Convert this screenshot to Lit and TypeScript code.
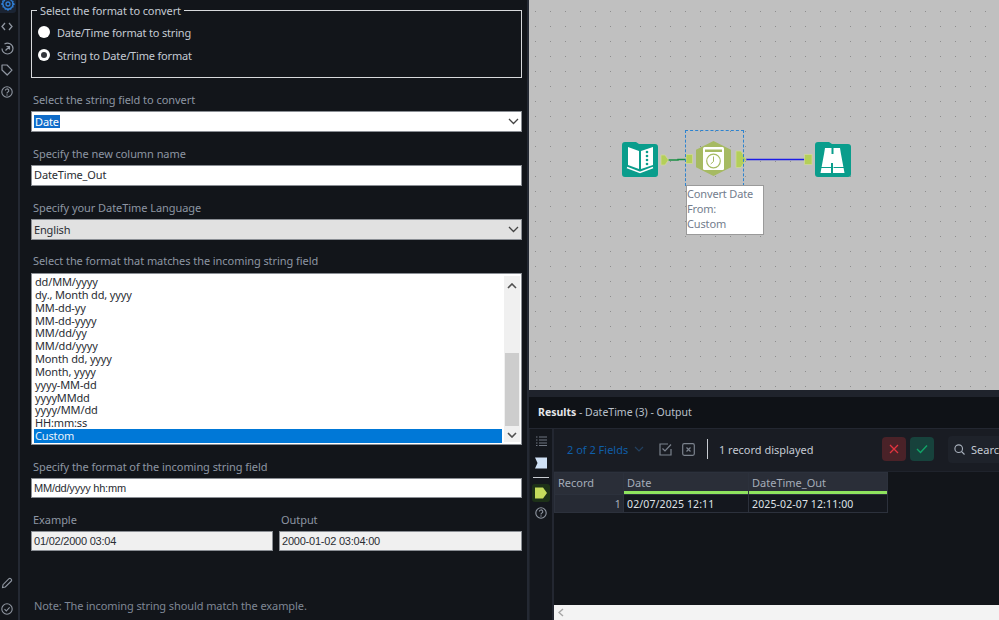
import { LitElement, html, css, svg } from "lit";
import { customElement } from "lit/decorators.js";

const chevDown = html`<svg class="chev" width="11" height="7" viewBox="0 0 11 7"><path d="M1 1l4.500 4.500L10 1" fill="none" stroke="#444" stroke-width="1.300"/></svg>`;

const FORMATS = ["dd/MM/yyyy","dy., Month dd, yyyy","MM-dd-yy","MM-dd-yyyy","MM/dd/yy","MM/dd/yyyy","Month dd, yyyy","Month, yyyy","yyyy-MM-dd","yyyyMMdd","yyyy/MM/dd","HH:mm:ss"];

@customElement("app-root")
export class AppRoot extends LitElement {
  static styles = css`
    :host { display: block; width: 999px; height: 620px; overflow: hidden; background: #12151a;
      font-family: "Noto Sans", "Open Sans", sans-serif; font-size: 11px; color: #aab2be; }
    * { box-sizing: border-box; }
    .app { display: flex; width: 999px; height: 620px; }

    .rail { width: 18px; flex: none; display: flex; flex-direction: column; background: #12151a; }
    .rail-active { width: 16px; height: 13px; background: #1b2433; border-radius: 0 0 3px 0; display: flex; justify-content: center; overflow: hidden; flex: none; }
    .rail-icons { display: flex; flex-direction: column; padding-top: 2px; width: 14px; }
    .slot { height: 22px; display: flex; align-items: center; justify-content: center; flex: none; }
    .rail-spacer { flex: 1; }
    .rail-bottom { display: flex; flex-direction: column; gap: 14px; padding-bottom: 5px; margin-left: 1px; }
    .sep { width: 2px; flex: none; background: #242933; }

    .panel { width: 507px; flex: none; background: #12151a; padding: 0 5px 0 11px; display: flex; flex-direction: column; }
    .group { position: relative; height: 68px; margin-top: 10px; border: 1px solid #d7d9dc; padding: 13px 0 0 6px; display: flex; flex-direction: column; gap: 7px; flex: none; }
    .legend { position: absolute; left: 5px; top: -7px; background: #12151a; padding: 0 3px; line-height: 13px; color: #c4cad3; letter-spacing: -.11px; }
    .radio-row { display: flex; align-items: center; gap: 7px; height: 16px; color: #c4cad3; letter-spacing: -.18px; }
    .radio { width: 12px; height: 12px; border-radius: 50%; background: #fff; flex: none; display: flex; align-items: center; justify-content: center; }
    .radio.on::after { content: ""; width: 6px; height: 6px; border-radius: 50%; background: #33363c; }

    .lbl { color: #8d95a3; line-height: 14px; height: 14px; padding-left: 2px; letter-spacing: -.06px; white-space: nowrap; flex: none; }
    .mt15 { margin-top: 15px; }
    .mt14 { margin-top: 14px; }
    .box { height: 21px; flex: none; margin-top: 4px; background: #fff; border: 1px solid #8a8e94; color: #2a2d33; display: flex; align-items: center; padding: 0 2px 0 2px; justify-content: space-between; letter-spacing: -.15px; }
    .box.h20 { height: 20px; }
    .txt { position: relative; top: -1px; }
    .hl { background: #0f6cc9; color: #fff; padding: 0 1px; line-height: 13px; }
    .box.gray { background: #e1e1e1; }
    .box.ro { background: #f0f0f0; height: 20px; }
    .box.arial { font-family: "Liberation Sans", sans-serif; letter-spacing: -.22px; }

    .list { margin-top: 5px; height: 172px; flex: none; background: #fff; border: 1px solid #8a8e94; padding: 2px 1px 2px 2px; display: flex; color: #2a2d33; }
    .items { flex: 1; min-width: 0; letter-spacing: -.15px; margin-top: -1px; }
    .item { height: 12.85px; line-height: 13px; padding-left: 1px; white-space: nowrap; }
    .item.sel { background: #0078d7; color: #e8f2fb; height: 14px; margin-top: -.5px; }
    .sb { width: 16px; flex: none; background: #f0f0f0; display: flex; flex-direction: column; margin-left: 2px; }
    .sb-btn { height: 19px; display: flex; align-items: center; justify-content: center; flex: none; }
    .sb-gap { height: 58px; flex: none; }
    .sb-thumb { flex: 1; background: #cdcdcd; margin: 0 1px 1px; }

    .pair { display: grid; grid-template-columns: 242px 243px; column-gap: 6px; }
    .note { margin-top: auto; margin-bottom: 7px; padding-left: 3px; color: #7f8795; letter-spacing: -.09px; line-height: 14px; }

    .right { width: 470px; flex: none; display: flex; flex-direction: column; }
    .canvas { height: 390px; flex: none; position: relative; background-color: #c0c0c0;
      background-image: radial-gradient(circle at center, #8e8e8e 0.6px, transparent 0.9px);
      background-size: 15px 15px; background-position: -1px 4px; overflow: hidden; }
    .wires { position: absolute; left: 0; top: 0; }
    .selbox { position: absolute; left: 156px; top: 130px; width: 59px; height: 56px; border: 1px dashed #2d83cf; border-bottom: none; }
    .note-box { position: absolute; left: 157px; top: 185px; width: 78px; height: 50px; background: #fff; border: 1px solid #9a9a9a; color: #737d8d; line-height: 15px; padding: 0; letter-spacing: -.15px; }

    .res-top { height: 7px; flex: none; background: #1f232c; }
    .res-head { height: 32px; flex: none; background: #0f1217; border-bottom: 1px solid #232731; display: flex; align-items: center; padding: 0 0 2px 9px; color: #b9c0ca; font-size: 10.5px; white-space: pre; }
    .res-head b { color: #e4e6ea; font-weight: 700; }
    .res-body { flex: 1; display: flex; min-height: 0; }
    .res-rail { width: 25px; flex: none; background: #14171d; border-right: 2px solid #232731; padding: 7px 0 0 0; display: flex; flex-direction: column; align-items: center; border-left: 1px solid #1d2128; }
    .ic2 { margin-top: 11px; }
    .rail-rule { width: 16px; height: 1px; background: #c8ccd2; margin-top: 8px; flex: none; }
    .rr-active { width: 18px; height: 18px; background: #1d3118; border-radius: 3px; display: flex; align-items: center; justify-content: center; margin-top: 6px; flex: none; }
    .ic5 { margin-top: 5px; }
    .res-main { flex: 1; min-width: 0; display: flex; flex-direction: column; background: #12151a; }
    .toolbar { height: 43px; flex: none; background: #191c23; border-bottom: 1px solid #1f232c; display: flex; align-items: center; padding: 0 0 2px 13px; white-space: nowrap; overflow: hidden; }
    .fields { color: #0f5ea8; font-size: 11px; width: 67px; flex: none; }
    .tb-chev { margin-right: 15px; flex: none; }
    .tb-icon { margin-right: 10px; flex: none; }
    .tb-div { width: 1px; height: 20px; background: #c8ccd2; margin: 0 11px 0 2px; flex: none; }
    .recs { color: #c4cad3; width: 163px; letter-spacing: -.02px; font-size: 11px; flex: none; }
    .btn { width: 24px; height: 24px; border-radius: 4px; display: flex; align-items: center; justify-content: center; flex: none; }
    .btn.red { background: #4a2228; margin-right: 4px; }
    .btn.green { background: #17423c; margin-right: 14px; }
    .search { height: 27px; width: 60px; flex: none; background: #1e222a; border-radius: 4px; display: flex; align-items: center; gap: 6px; padding-left: 6px; color: #c4cad3; }

    table { border-collapse: collapse; table-layout: fixed; width: 333px; }
    th, td { border: 1px solid #2c313c; padding: 0 3px; height: 18px; font-weight: 400; text-align: left; white-space: nowrap; overflow: hidden; }
    th { background: #2a2e38; color: #a4acb8; height: 22px; padding-bottom: 2px; }
    td { background: #14171e; color: #dfe2e7; font-size: 10.5px; letter-spacing: .12px; }
    th.g { box-shadow: inset 0 -3px 0 #8fe35e; }
    .idx { background: #262a34; text-align: right; color: #aab2be; padding-right: 2px; }
    .grow { flex: 1; }
    .hscroll { height: 15px; flex: none; background: #f3f3f3; display: flex; align-items: center; padding-left: 4px; }
  `;

  render() {
    return html`<div class="app">
      ${this.rail()}
      <div class="sep"></div>
      ${this.panel()}
      <div class="sep"></div>
      <div class="right">
        ${this.canvas()}
        ${this.results()}
      </div>
    </div>`;
  }

  rail() {
    const c = "#8f96a1";
    return html`<div class="rail">
      <div class="rail-active">
        <svg width="14" height="14" viewBox="0 0 14 14" style="margin-top:-3px"><path d="M7 1.200l1 1.300 1.700-.3.600 1.600 1.600.6-.3 1.700 1.300 1-1.300 1 .3 1.700-1.600.6-.6 1.600-1.700-.3-1 1.300-1-1.300-1.700.3-.6-1.600-1.600-.6.3-1.700L.8 7l1.300-1-.3-1.700 1.600-.6.6-1.600 1.700.3z" fill="none" stroke="#2f7fd6" stroke-width="1.400"/><circle cx="7" cy="7" r="2" fill="none" stroke="#2f7fd6" stroke-width="1.300"/></svg>
      </div>
      <div class="rail-icons">
        <div class="slot"><svg width="12" height="9" viewBox="0 0 12 9"><path d="M4 1L1 4.500 4 8M8 1l3 3.500L8 8" fill="none" stroke="${c}" stroke-width="1.300"/></svg></div>
        <div class="slot"><svg width="13" height="13" viewBox="0 0 13 13"><path d="M3.500 2A5.500 5.500 0 0 1 12 6.500a5.500 5.500 0 0 1-5.500 5.500A5.500 5.500 0 0 1 1 6.500" fill="none" stroke="${c}" stroke-width="1.200"/><path d="M4.500 8.500l4-4M5.500 4.500h3v3" fill="none" stroke="${c}" stroke-width="1.200"/></svg></div>
        <div class="slot"><svg width="12" height="12" viewBox="0 0 12 12"><path d="M1 1h5l5 5.200L6.200 11 1 6z" fill="none" stroke="${c}" stroke-width="1.200" stroke-linejoin="round"/></svg></div>
        <div class="slot"><svg width="12" height="12" viewBox="0 0 12 12"><circle cx="6" cy="6" r="5.200" fill="none" stroke="${c}" stroke-width="1.100"/><path d="M4.400 4.600a1.700 1.700 0 1 1 2.500 1.500c-.6.300-.9.700-.9 1.300" fill="none" stroke="${c}" stroke-width="1.100"/><circle cx="6" cy="9" r=".7" fill="${c}"/></svg></div>
      </div>
      <div class="rail-spacer"></div>
      <div class="rail-bottom">
        <svg width="12" height="12" viewBox="0 0 12 12"><path d="M1.500 10.500l.5-2.800L8 1.700a1.200 1.200 0 0 1 1.700 0l.6.600a1.200 1.200 0 0 1 0 1.700l-6 6z" fill="none" stroke="${c}" stroke-width="1.100"/></svg>
        <svg width="12" height="12" viewBox="0 0 12 12"><circle cx="6" cy="6" r="5.200" fill="none" stroke="${c}" stroke-width="1.100"/><path d="M3.500 6.200l1.800 1.800 3.300-3.600" fill="none" stroke="${c}" stroke-width="1.100"/></svg>
      </div>
    </div>`;
  }

  panel() {
    return html`<div class="panel">
      <div class="group">
        <div class="legend">Select the format to convert</div>
        <div class="radio-row"><span class="radio"></span>Date/Time format to string</div>
        <div class="radio-row"><span class="radio on"></span>String to Date/Time format</div>
      </div>
      <div class="lbl mt15">Select the string field to convert</div>
      <div class="box"><span class="hl">Date</span>${chevDown}</div>
      <div class="lbl mt15">Specify the new column name</div>
      <div class="box"><span class="txt">DateTime_Out</span></div>
      <div class="lbl mt15">Specify your DateTime Language</div>
      <div class="box gray"><span>English</span>${chevDown}</div>
      <div class="lbl mt14">Select the format that matches the incoming string field</div>
      <div class="list">
        <div class="items">
          ${FORMATS.map((f) => html`<div class="item">${f}</div>`)}
          <div class="item sel">Custom</div>
        </div>
        <div class="sb">
          <div class="sb-btn"><svg width="10" height="6" viewBox="0 0 10 6"><path d="M1 5l4-4 4 4" fill="none" stroke="#505050" stroke-width="1.600"/></svg></div>
          <div class="sb-gap"></div>
          <div class="sb-thumb"></div>
          <div class="sb-btn" style="height:15px"><svg width="10" height="6" viewBox="0 0 10 6"><path d="M1 1l4 4 4-4" fill="none" stroke="#505050" stroke-width="1.600"/></svg></div>
        </div>
      </div>
      <div class="lbl mt15">Specify the format of the incoming string field</div>
      <div class="box h20 arial"><span>MM/dd/yyyy hh:mm</span></div>
      <div class="pair mt15">
        <div><div class="lbl">Example</div><div class="box ro arial"><span>01/02/2000 03:04</span></div></div>
        <div><div class="lbl">Output</div><div class="box ro arial"><span>2000-01-02 03:04:00</span></div></div>
      </div>
      <div class="note">Note: The incoming string should match the example.</div>
    </div>`;
  }

  canvas() {
    const teal = "#0a9d8c";
    const lime = "#b4cf59";
    const edge = "#cfd89a";
    const olive = "#a6ba62";
    return html`<div class="canvas">
      <svg class="wires" width="470" height="390" viewBox="529 0 470 390">
        ${svg`
        <path d="M668 160H678V159.500H687" stroke="#1a8f44" stroke-width="1.500" fill="none"/>
        <path d="M745 159.500H806" stroke="#1c1ce6" stroke-width="1.700" fill="none"/>

        <path d="M622 145a3 3 0 0 1 3-3h11l3 2h16a3 3 0 0 1 3 3v27a3 3 0 0 1-3 3h-30a3 3 0 0 1-3-3z" fill="${teal}"/>
        <path d="M628 147l11 4v18l-11-4z" fill="#fff"/>
        <path d="M641 151l12-4v18l-12 4z" fill="#fff"/>
        <circle cx="647" cy="152" r="1.300" fill="${teal}"/><circle cx="647" cy="156" r="1.300" fill="${teal}"/><circle cx="647" cy="160" r="1.300" fill="${teal}"/><circle cx="647" cy="164" r="1.300" fill="${teal}"/>
        <path d="M627 167.500l13 5 13-5" stroke="#fff" stroke-width="1.500" fill="none"/>

        <path d="M661 155h4l3.500 5-3.500 5h-4z" fill="${lime}" stroke="${edge}" stroke-width=".8"/>
        <rect x="686" y="154.500" width="6.500" height="9" fill="${lime}" stroke="${edge}" stroke-width=".8"/>
        <path d="M713.500 141l17.500 8.800v17.500L713.500 176 696 167.300v-17.500z" fill="${olive}"/>
        <rect x="703" y="147" width="21" height="23" rx="1.500" fill="#fff"/>
        <rect x="705" y="149.500" width="17" height="2.500" fill="${olive}"/>
        <circle cx="713.500" cy="161" r="6.800" fill="none" stroke="${olive}" stroke-width="1.200"/>
        <path d="M713.500 156.500v5l-2.800 2.500" fill="none" stroke="${olive}" stroke-width="1"/>
        <path d="M736 151h5l5 8.500-5 8h-5z" fill="${lime}" stroke="${edge}" stroke-width=".8"/>
        <rect x="804.500" y="154.500" width="7.500" height="10" fill="${lime}" stroke="${edge}" stroke-width=".8"/>

        <path d="M815 145a3 3 0 0 1 3-3h11l3 2h16a3 3 0 0 1 3 3v27a3 3 0 0 1-3 3h-30a3 3 0 0 1-3-3z" fill="${teal}"/>
        <path d="M825 148h6.500v6h2v-6h6.500l.8 5 3.700 20h-11.500v-10h-2v10H820.500l3.700-20z" fill="#fff"/>
        <path d="M821 167.500h10.500M833.500 167.500h10.500" stroke="${teal}" stroke-width="1"/>
        `}
      </svg>
      <div class="selbox"></div>
      <div class="note-box">Convert Date<br />From:<br />Custom</div>
    </div>`;
  }

  results() {
    return html`
      <div class="res-top"></div>
      <div class="res-head"><b>Results</b> - DateTime (3) - Output</div>
      <div class="res-body">
        <div class="res-rail">
          <svg width="11" height="10" viewBox="0 0 11 10"><path d="M3 1h8M3 4h8M3 7h8M3 9.500h8M0 1h1.500M0 4h1.500M0 7h1.500M0 9.500h1.500" stroke="#6f7682" stroke-width="1"/></svg>
          <svg class="ic2" width="12" height="12" viewBox="0 0 12 12"><path d="M0 .5h12v11H0l2.500-5.500z" fill="#cfe0f5"/></svg>
          <div class="rail-rule"></div>
          <div class="rr-active"><svg width="12" height="12" viewBox="0 0 12 12"><path d="M0 .5h8l4 5.500-4 5.500H0z" fill="#c5dc5c"/></svg></div>
          <svg class="ic5" width="12" height="12" viewBox="0 0 12 12"><circle cx="6" cy="6" r="5.200" fill="none" stroke="#8f96a1" stroke-width="1.100"/><path d="M4.400 4.600a1.700 1.700 0 1 1 2.500 1.500c-.6.300-.9.700-.9 1.300" fill="none" stroke="#8f96a1" stroke-width="1.100"/><circle cx="6" cy="9" r=".7" fill="#8f96a1"/></svg>
        </div>
        <div class="res-main">
          <div class="toolbar">
            <span class="fields">2 of 2 Fields</span>
            <svg class="tb-chev" width="10" height="6" viewBox="0 0 10 6"><path d="M1 1l4 4 4-4" fill="none" stroke="#23405f" stroke-width="1.200"/></svg>
            <svg class="tb-icon" width="13" height="13" viewBox="0 0 13 13"><path d="M12 6v6H1V1h8" fill="none" stroke="#7b828d" stroke-width="1.200"/><path d="M3.500 5.500L6 8l6-6.500" fill="none" stroke="#7b828d" stroke-width="1.200"/></svg>
            <svg class="tb-icon" width="13" height="13" viewBox="0 0 13 13"><rect x=".7" y=".7" width="11.600" height="11.600" rx="1.500" fill="none" stroke="#7b828d" stroke-width="1.200"/><path d="M4.500 4.500l4 4M8.500 4.500l-4 4" stroke="#7b828d" stroke-width="1.200"/></svg>
            <div class="tb-div"></div>
            <span class="recs">1 record displayed</span>
            <div class="btn red"><svg width="10" height="10" viewBox="0 0 10 10"><path d="M1 1l8 8M9 1l-8 8" stroke="#e2343f" stroke-width="1.300"/></svg></div>
            <div class="btn green"><svg width="12" height="10" viewBox="0 0 12 10"><path d="M1 5l3.500 3.500L11 1.500" fill="none" stroke="#11a468" stroke-width="1.400"/></svg></div>
            <div class="search"><svg width="11" height="11" viewBox="0 0 11 11" style="flex:none"><circle cx="4.700" cy="4.700" r="3.800" fill="none" stroke="#aab2be" stroke-width="1.100"/><path d="M7.500 7.500L10.500 10.500" stroke="#aab2be" stroke-width="1.100"/></svg>Search</div>
          </div>
          <table>
            <colgroup><col style="width:69px" /><col style="width:125px" /><col style="width:139px" /></colgroup>
            <tr><th>Record</th><th class="g">Date</th><th class="g">DateTime_Out</th></tr>
            <tr><td class="idx">1</td><td>02/07/2025 12:11</td><td>2025-02-07 12:11:00</td></tr>
          </table>
          <div class="grow"></div>
          <div class="hscroll"><svg width="6" height="9" viewBox="0 0 6 9"><path d="M5 1L1 4.500 5 8" fill="none" stroke="#a6a6a6" stroke-width="1.400"/></svg></div>
        </div>
      </div>`;
  }
}
